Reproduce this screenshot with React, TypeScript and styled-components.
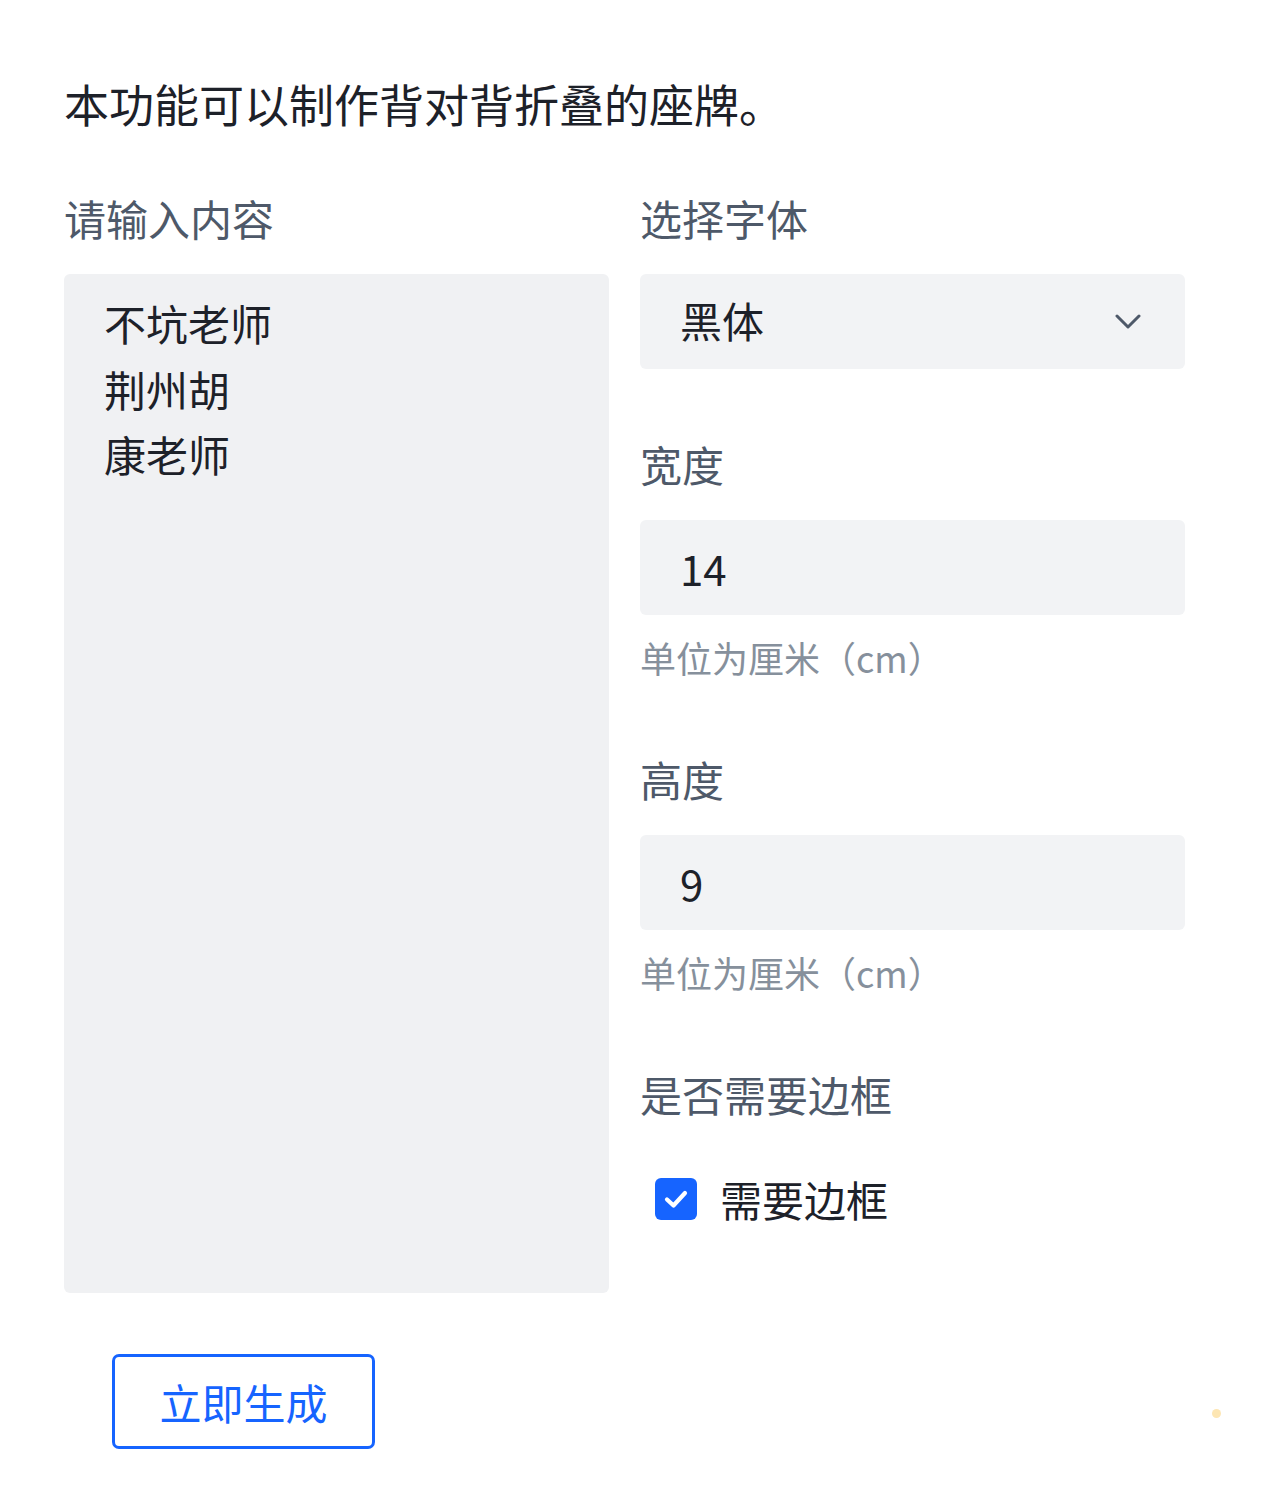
import styled, { createGlobalStyle } from 'styled-components';

const GlobalStyle = createGlobalStyle`
  html, body {
    margin: 0;
    padding: 0;
    background: #ffffff;
  }
  body {
    font-family: "Noto Sans CJK SC", "Noto Sans", sans-serif;
    color: #1d2129;
  }
  * {
    box-sizing: border-box;
  }
`;

const Page = styled.div`
  position: relative;
  width: 1266px;
  min-height: 1503px;
  padding: 71px 81px 0 64px;
`;

const Intro = styled.p`
  margin: 0;
  font-size: 45px;
  line-height: 66px;
  color: #1d2129;
`;

const Columns = styled.div`
  display: grid;
  grid-template-columns: 545px 545px;
  column-gap: 31px;
  margin-top: 51px;
`;

const Column = styled.div`
  display: flex;
  flex-direction: column;
`;

const Group = styled.div`
  display: flex;
  flex-direction: column;
  & + & {
    margin-top: 65px;
  }
`;

const Label = styled.div`
  font-size: 42px;
  line-height: 59px;
  color: #4e5969;
  margin-bottom: 27px;
`;

const TextArea = styled.textarea`
  display: block;
  width: 100%;
  height: 1019px;
  padding: 16px 40px;
  border: none;
  outline: none;
  resize: none;
  border-radius: 6px;
  background: #f0f1f3;
  font-family: inherit;
  font-size: 42px;
  line-height: 65.5px;
  color: #1d2129;
`;

const SelectBox = styled.div`
  display: flex;
  align-items: center;
  justify-content: space-between;
  height: 95px;
  padding: 0 44px 0 40px;
  border-radius: 6px;
  background: #f2f3f5;
  font-size: 42px;
  color: #1d2129;
`;

const SelectValue = styled.span`
  padding-bottom: 4px;
`;

const Input = styled.input`
  display: block;
  width: 100%;
  height: 95px;
  padding: 0 40px;
  border: none;
  outline: none;
  border-radius: 6px;
  background: #f2f3f5;
  font-family: inherit;
  font-size: 42px;
  color: #1d2129;
`;

const Helper = styled.div`
  margin-top: 15px;
  font-size: 36px;
  line-height: 54px;
  color: #86909c;
`;

const CheckRow = styled.label`
  display: flex;
  align-items: center;
  gap: 23px;
  margin-top: 17px;
  padding-left: 15px;
  height: 63px;
  font-size: 42px;
  color: #1d2129;
`;

const CheckBox = styled.span`
  display: inline-flex;
  align-items: center;
  justify-content: center;
  width: 42px;
  height: 42px;
  border-radius: 6px;
  background: #1664ff;
`;

const Actions = styled.div`
  margin-top: 61px;
  padding-left: 48px;
`;

const GenerateButton = styled.button`
  width: 263px;
  height: 95px;
  border: 3px solid #1664ff;
  border-radius: 7px;
  background: #ffffff;
  color: #1664ff;
  font-family: inherit;
  font-size: 42px;
  cursor: pointer;
`;

const Dot = styled.span`
  position: absolute;
  left: 1212px;
  top: 1409px;
  width: 9px;
  height: 9px;
  border-radius: 50%;
  background: #fde6b3;
`;

const Chevron = () => (
  <svg width="26" height="16" viewBox="0 0 26 16" fill="none">
    <path d="M2 2 L13 13 L24 2" stroke="#4e5969" strokeWidth="3" strokeLinecap="round" strokeLinejoin="round" />
  </svg>
);

const Check = () => (
  <svg width="24" height="20" viewBox="0 0 24 20" fill="none">
    <path d="M3 10.5 L9.5 16.5 L21 4" stroke="#ffffff" strokeWidth="4.2" strokeLinecap="round" strokeLinejoin="round" />
  </svg>
);

export default function App() {
  return (
    <>
      <GlobalStyle />
      <Page>
        <Intro>本功能可以制作背对背折叠的座牌。</Intro>
        <Columns>
          <Column>
            <Label>请输入内容</Label>
            <TextArea defaultValue={'不坑老师\n荆州胡\n康老师'} />
            <Actions>
              <GenerateButton>立即生成</GenerateButton>
            </Actions>
          </Column>
          <Column>
            <Group>
              <Label>选择字体</Label>
              <SelectBox>
                <SelectValue>黑体</SelectValue>
                <Chevron />
              </SelectBox>
            </Group>
            <Group>
              <Label>宽度</Label>
              <Input defaultValue="14" />
              <Helper>单位为厘米（cm）</Helper>
            </Group>
            <Group>
              <Label>高度</Label>
              <Input defaultValue="9" />
              <Helper>单位为厘米（cm）</Helper>
            </Group>
            <Group>
              <Label>是否需要边框</Label>
              <CheckRow>
                <CheckBox>
                  <Check />
                </CheckBox>
                <span>需要边框</span>
              </CheckRow>
            </Group>
          </Column>
        </Columns>
        <Dot />
      </Page>
    </>
  );
}
